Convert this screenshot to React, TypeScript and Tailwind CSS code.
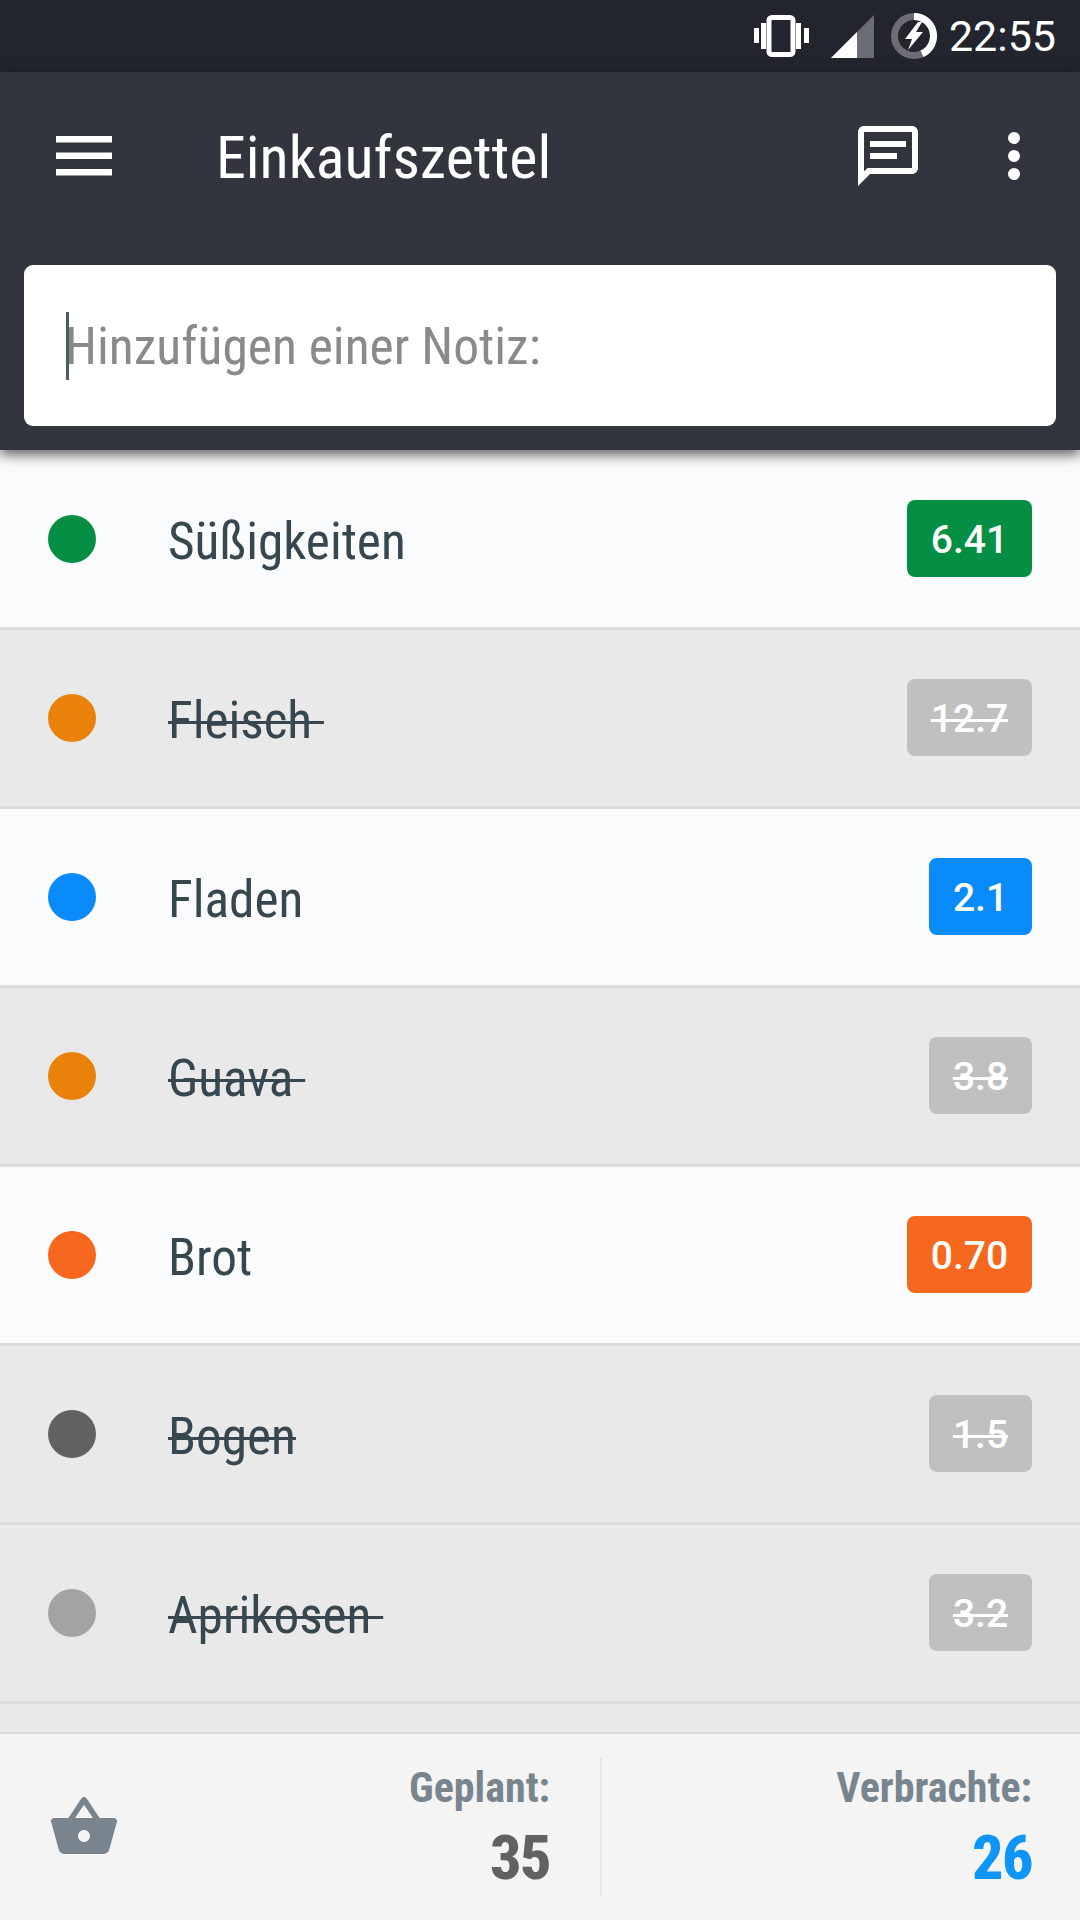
import React from "react";

const rows = [
  { name: "Süßigkeiten", dot: "bg-[#058f44]", badge: "bg-[#058f44]", price: "6.41", wide: true, done: false },
  { name: "Fleisch ", dot: "bg-[#ea8108]", badge: "bg-[#c0c0c0]", price: "12.7", wide: true, done: true },
  { name: "Fladen", dot: "bg-[#0a8bfb]", badge: "bg-[#0a8bfb]", price: "2.1", wide: false, done: false },
  { name: "Guava ", dot: "bg-[#ea8108]", badge: "bg-[#c0c0c0]", price: "3.8", wide: false, done: true },
  { name: "Brot", dot: "bg-[#f5681d]", badge: "bg-[#f5681d]", price: "0.70", wide: true, done: false },
  { name: "Bogen", dot: "bg-[#616161]", badge: "bg-[#c0c0c0]", price: "1.5", wide: false, done: true },
  { name: "Aprikosen ", dot: "bg-[#a3a3a3]", badge: "bg-[#c0c0c0]", price: "3.2", wide: false, done: true },
];

function Row({ r }: { r: (typeof rows)[number] }) {
  return (
    <div
      className={`h-[179px] shrink-0 flex items-center border-b-[3px] border-[#dcdcdc] pl-[48px] pr-[48px] ${
        r.done ? "bg-[#e9e9e9]" : "bg-[#fafbfd]"
      }`}
    >
      <div className={`w-[48px] h-[48px] rounded-full shrink-0 ${r.dot}`} />
      <div
        className={`ml-[72px] flex-1 pt-[5px] text-[51.3px] leading-[56px] text-[#37474f] whitespace-pre [font-stretch:75%] ${
          r.done ? "line-through decoration-[3px]" : ""
        }`}
      >
        {r.name}
      </div>
      <div
        className={`h-[77px] mb-[2px] rounded-[8px] flex items-center justify-center pt-[5px] text-white text-[39px] font-medium ${r.badge} ${
          r.wide ? "w-[125px]" : "w-[103px]"
        } ${r.done ? "line-through decoration-[3px]" : ""}`}
      >
        {r.price}
      </div>
    </div>
  );
}

export default function App() {
  return (
    <div className="w-[1080px] h-[1920px] flex flex-col overflow-hidden bg-[#e9e9e9] font-['Roboto',sans-serif]">
      <div className="h-[72px] shrink-0 bg-[#22252e] flex items-center justify-end pr-[24px]">
        <svg width="55" height="42" viewBox="0 0 55 42" fill="none" className="mr-[22px]">
          <rect x="15" y="2.5" width="24" height="37" rx="3" stroke="#fff" strokeWidth="5" />
          <rect x="0" y="13" width="5" height="15" fill="#fff" />
          <rect x="7" y="8" width="5" height="26" fill="#fff" />
          <rect x="42" y="8" width="5" height="26" fill="#fff" />
          <rect x="50" y="13" width="5" height="15" fill="#fff" />
        </svg>
        <svg width="44" height="43" viewBox="0 0 44 43" className="mr-[16px]">
          <polygon points="0,43 43,0 43,43" fill="#6b6d73" />
          <polygon points="0,43 26,17 26,43" fill="#fff" />
        </svg>
        <svg width="46" height="46" viewBox="0 0 46 46" className="mr-[12px]">
          <circle cx="23" cy="23" r="19.5" fill="none" stroke="#6b6d73" strokeWidth="7" />
          <path d="M23 3.5A19.5 19.5 0 0 1 31 40.8" fill="none" stroke="#fff" strokeWidth="7" />
          <polygon points="27,9 14,26 21,26 17,37 32,19 25,19 31,9" fill="#fff" />
        </svg>
        <div className="text-white text-[43px] leading-none">22:55</div>
      </div>

      <div className="relative z-10 shrink-0 bg-[#32353e] shadow-[0_5px_12px_rgba(0,0,0,0.6)] px-[24px] pb-[24px]">
        <div className="h-[168px] flex items-center -mx-[24px] pl-[56px] pr-[30px]">
          <svg width="56" height="40" viewBox="0 0 56 40" className="shrink-0">
            <rect x="0" y="0" width="56" height="6.5" fill="#fff" />
            <rect x="0" y="16.5" width="56" height="6.5" fill="#fff" />
            <rect x="0" y="33" width="56" height="6.5" fill="#fff" />
          </svg>
          <div className="ml-[104px] pt-[4px] flex-1 text-white text-[60px] leading-none [font-stretch:75%]">Einkaufszettel</div>
          <svg width="72" height="72" viewBox="0 0 24 24" fill="#fff" className="shrink-0 mr-[54px]">
            <path d="M20 2H4c-1.1 0-1.99.9-1.99 2L2 22l4-4h14c1.1 0 2-.9 2-2V4c0-1.1-.9-2-2-2zm0 14H5.17L4 17.17V4h16v12zM6 7h12v2H6zM6 11h9v2H6z" />
          </svg>
          <svg width="72" height="72" viewBox="0 0 72 72" fill="#fff" className="shrink-0">
            <circle cx="36" cy="18" r="6" />
            <circle cx="36" cy="36" r="6" />
            <circle cx="36" cy="54" r="6" />
          </svg>
        </div>
        <div className="mt-[25px] h-[161px] bg-white rounded-[9px] flex items-center pl-[42px]">
          <div className="w-[3px] h-[68px] bg-[#4c5a63] -mr-[4px] shrink-0" />
          <div className="pt-[2px] text-[#8a8a8a] text-[51.5px] leading-none [font-stretch:75%]">Hinzufügen einer Notiz:</div>
        </div>
      </div>

      <div className="flex-1 min-h-0 pt-px flex flex-col overflow-hidden bg-[#fafbfd]">
        {rows.map((r) => (
          <Row key={r.name} r={r} />
        ))}
        <div className="flex-1 bg-[#e9e9e9]" />
      </div>

      <div className="h-[188px] shrink-0 bg-[#f4f4f4] border-t-[2px] border-[#dcdcdc] flex items-center">
        <div className="w-[600px] flex items-center pl-[48px] pr-[50px]">
          <svg width="72" height="72" viewBox="0 0 24 24" fill="#78858e" className="shrink-0">
            <path d="M17.21 9l-4.38-6.56c-.19-.28-.51-.42-.83-.42-.32 0-.64.14-.83.43L6.79 9H2c-.55 0-1 .45-1 1 0 .09.01.18.04.27l2.54 9.27c.23.84 1 1.46 1.92 1.46h13c.92 0 1.69-.62 1.93-1.46l2.54-9.27L23 10c0-.55-.45-1-1-1h-4.79zM9 9l3-4.4L15 9H9zm3 8c-1.1 0-2-.9-2-2s.9-2 2-2 2 .9 2 2-.9 2-2 2z" />
          </svg>
          <div className="flex-1 text-right [font-stretch:75%] font-bold pt-[1px]">
            <div className="text-[#78858e] text-[42px] leading-[52px]">Geplant:</div>
            <div className="text-[#616161] text-[62px] leading-[72px] mt-[8px] tracking-[-1.5px] font-extrabold">35</div>
          </div>
        </div>
        <div className="w-[2px] h-[138px] bg-[#e5e5e5]" />
        <div className="flex-1 text-right pr-[48px] [font-stretch:75%] font-bold pt-[1px]">
          <div className="text-[#78858e] text-[42px] leading-[52px]">Verbrachte:</div>
          <div className="text-[#0d96f7] text-[62px] leading-[72px] mt-[8px] tracking-[-1.5px] font-extrabold">26</div>
        </div>
      </div>
    </div>
  );
}
